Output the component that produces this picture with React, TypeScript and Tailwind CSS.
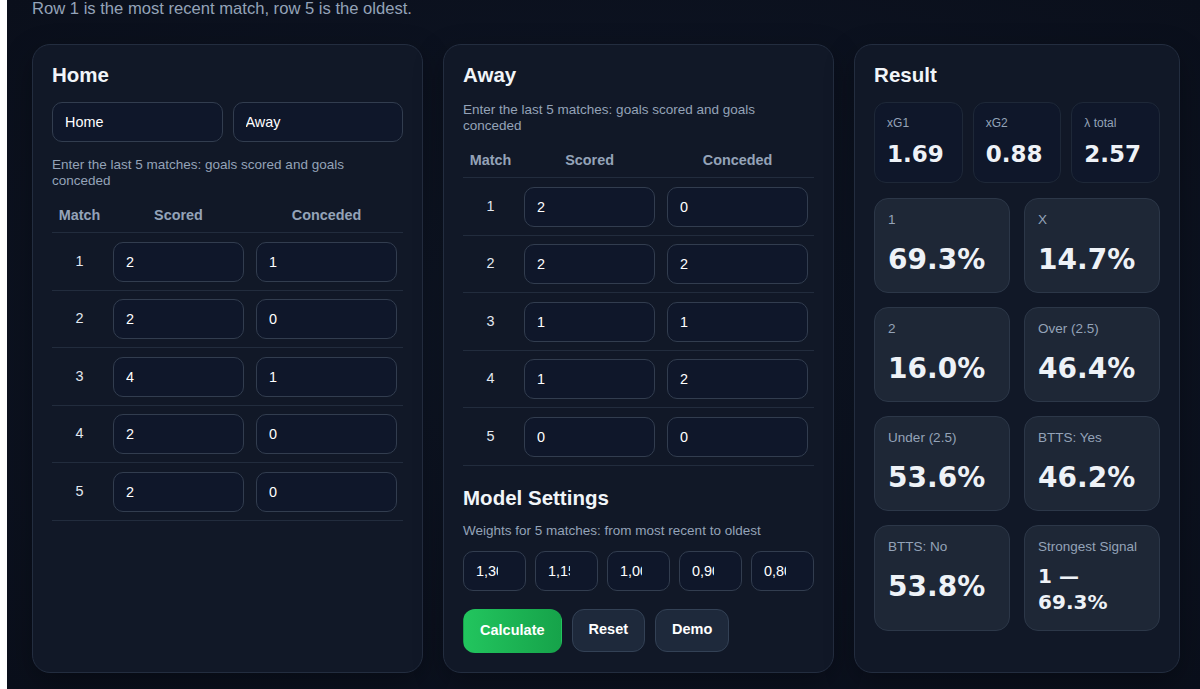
import React from "react";

const homeRows = [
  [2, 1],
  [2, 0],
  [4, 1],
  [2, 0],
  [2, 0],
];

const awayRows = [
  [2, 0],
  [2, 2],
  [1, 1],
  [1, 2],
  [0, 0],
];

const weights = ["1,30", "1,15", "1,00", "0,90", "0,80"];

const stats = [
  { label: "xG1", value: "1.69" },
  { label: "xG2", value: "0.88" },
  { label: "λ total", value: "2.57" },
];

const probs = [
  { label: "1", value: "69.3%" },
  { label: "X", value: "14.7%" },
  { label: "2", value: "16.0%" },
  { label: "Over (2.5)", value: "46.4%" },
  { label: "Under (2.5)", value: "53.6%" },
  { label: "BTTS: Yes", value: "46.2%" },
  { label: "BTTS: No", value: "53.8%" },
  { label: "Strongest Signal", value: "1 — 69.3%", small: true },
];

function Field({ value }: { value: string | number }) {
  return (
    <input
      type="text"
      defaultValue={String(value)}
      className="h-10 w-full rounded-[10px] border border-[#323d4f] bg-[#0f172a] px-3 text-[14.4px] text-white outline-none"
    />
  );
}

function Heading({ children, className = "" }: { children: React.ReactNode; className?: string }) {
  return <h2 className={`text-[20.5px] font-bold leading-[22px] text-[#f1f5f9] ${className}`}>{children}</h2>;
}

function MatchTable({ rows }: { rows: number[][] }) {
  return (
    <div className="mt-[9px]">
      <div className="grid grid-cols-[55px_143px_1fr] border-b border-[#222c3d] py-[7px] text-[14.4px] font-bold leading-5 text-[#94a3b8]">
        <div className="text-center">Match</div>
        <div className="text-center">Scored</div>
        <div className="text-center">Conceded</div>
      </div>
      {rows.map(([scored, conceded], i) => (
        <div
          key={i}
          className="grid grid-cols-[55px_143px_1fr] items-center border-b border-[#222c3d] pt-[8.5px] pb-2"
        >
          <div className="text-center text-[14.4px] text-[#e2e8f0]">{i + 1}</div>
          <div className="px-1.5">
            <Field value={scored} />
          </div>
          <div className="px-1.5">
            <Field value={conceded} />
          </div>
        </div>
      ))}
    </div>
  );
}

const card =
  "rounded-[18px] border border-[#232d3f] bg-[#111827] p-[19px] shadow-[0_10px_30px_rgba(0,0,0,0.3)]";

export default function App() {
  return (
    <div className="flex min-h-screen bg-[#0c1220] font-['Liberation_Sans',Arial,sans-serif]">
      <div className="w-[7px] shrink-0 bg-white" />
      <main className="flex-1 bg-[radial-gradient(ellipse_at_center,#0f1727_0%,#0c1220_60%,#0a0f1b_100%)] pb-4 pl-[25px] pr-5">
        <p className="text-[16.6px] leading-[18px] text-[#94a3b8]">
          Row 1 is the most recent match, row 5 is the oldest.
        </p>

        <div className="mt-[26px] grid grid-cols-[1.2fr_1.2fr_1fr] gap-5">
          {/* Home team */}
          <section className={card}>
            <Heading className="mb-4">Home</Heading>
            <div className="grid grid-cols-2 gap-2.5">
              <Field value="Home" />
              <Field value="Away" />
            </div>
            <p className="mt-[15px] text-[13.5px] leading-4 text-[#94a3b8]">
              Enter the last 5 matches: goals scored and goals conceded
            </p>
            <MatchTable rows={homeRows} />
          </section>

          {/* Away team + settings */}
          <section className={card}>
            <Heading className="mb-4">Away</Heading>
            <p className="text-[13.5px] leading-4 text-[#94a3b8]">
              Enter the last 5 matches: goals scored and goals conceded
            </p>
            <MatchTable rows={awayRows} />

            <Heading className="mt-[21px]">Model Settings</Heading>
            <p className="mt-[14px] text-[13.5px] leading-4 text-[#94a3b8]">
              Weights for 5 matches: from most recent to oldest
            </p>
            <div className="mt-3 grid grid-cols-5 gap-[9px]">
              {weights.map((w) => (
                <input
                  key={w}
                  type="text"
                  defaultValue={w}
                  className="h-10 w-full min-w-0 rounded-[10px] border border-[#323d4f] bg-[#0f172a] pl-3 pr-[27px] text-[14.4px] text-white outline-none"
                />
              ))}
            </div>
            <div className="mt-[18px] flex gap-2.5">
              <button className="h-[44px] rounded-xl border border-transparent bg-gradient-to-r from-[#22c55e] to-[#16a34a] px-4 text-[14.5px] font-bold text-white">
                Calculate
              </button>
              <button className="h-[43px] rounded-xl border border-[#334155] bg-[#1e293b] px-4 text-[14.5px] font-bold text-white">
                Reset
              </button>
              <button className="h-[43px] rounded-xl border border-[#334155] bg-[#1e293b] px-4 text-[14.5px] font-bold text-white">
                Demo
              </button>
            </div>
          </section>

          {/* Result */}
          <section className={card}>
            <Heading className="mb-4">Result</Heading>
            <div className="grid grid-cols-3 gap-2.5">
              {stats.map((s) => (
                <div key={s.label} className="rounded-xl border border-[#1e2838] bg-[#0f172a] p-3">
                  <div className="text-[12px] leading-4 text-[#94a3b8]">{s.label}</div>
                  <div className="mt-2 font-['DejaVu_Sans',sans-serif] text-[23px] font-bold leading-[31px] text-[#eef2f7]">
                    {s.value}
                  </div>
                </div>
              ))}
            </div>
            <div className="mt-[15px] grid grid-cols-2 gap-3.5">
              {probs.map((p) => (
                <div
                  key={p.label}
                  className="rounded-[14px] border border-[#2c3748] bg-[#1e2736] px-[13px] pb-[15px] pt-3"
                >
                  <div className="text-[13.5px] leading-[18px] text-[#94a3b8]">{p.label}</div>
                  <div
                    className={
                      p.small
                        ? "mt-[7px] font-['DejaVu_Sans',sans-serif] text-[20px] font-bold leading-[26px] text-[#eef2f7]"
                        : "mt-[14px] font-['DejaVu_Sans',sans-serif] text-[28px] font-bold leading-[34px] text-[#eef2f7]"
                    }
                  >
                    {p.value}
                  </div>
                </div>
              ))}
            </div>
          </section>
        </div>
      </main>
    </div>
  );
}
